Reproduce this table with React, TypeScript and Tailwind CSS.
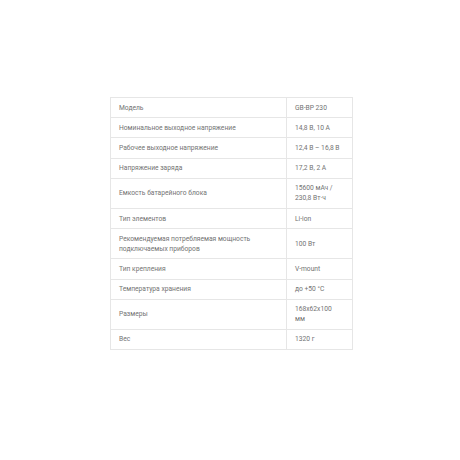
const rows: [string, string][] = [
    ["Модель", "GB-BP 230"],
    ["Номинальное выходное напряжение", "14,8 В, 10 А"],
    ["Рабочее выходное напряжение", "12,4 В – 16,8 В"],
    ["Напряжение заряда", "17,2 В, 2 А"],
    ["Емкость батарейного блока", "15600 мАч / 230,8 Вт·ч"],
    ["Тип элементов", "Li-ion"],
    ["Рекомендуемая потребляемая мощность подключаемых приборов", "100 Вт"],
    ["Тип крепления", "V-mount"],
    ["Температура хранения", "до +50 °C"],
    ["Размеры", "168x62x100 мм"],
    ["Вес", "1320 г"],
]

const App = () => {
    return (
        <div className="w-[460px] h-[460px] bg-white pt-[97px] pl-[110px]" style={{ fontFamily: "Roboto, 'Noto Sans', sans-serif" }}>
            <table className="w-[242px] border-collapse table-fixed text-[6.7px] leading-[10px] text-[#737373]">
                <colgroup>
                    <col className="w-[176px]" />
                    <col className="w-[66px]" />
                </colgroup>
                <tbody>
                    {rows.map(([name, value]) => (
                        <tr key={name}>
                            <td className="border border-[#e6e6e6] px-[8px] py-[4.6px] align-middle">{name}</td>
                            <td className="border border-[#e6e6e6] pl-[8px] pr-[12px] py-[4.6px] align-middle">{value}</td>
                        </tr>
                    ))}
                </tbody>
            </table>
        </div>
    )
}

export default App;
